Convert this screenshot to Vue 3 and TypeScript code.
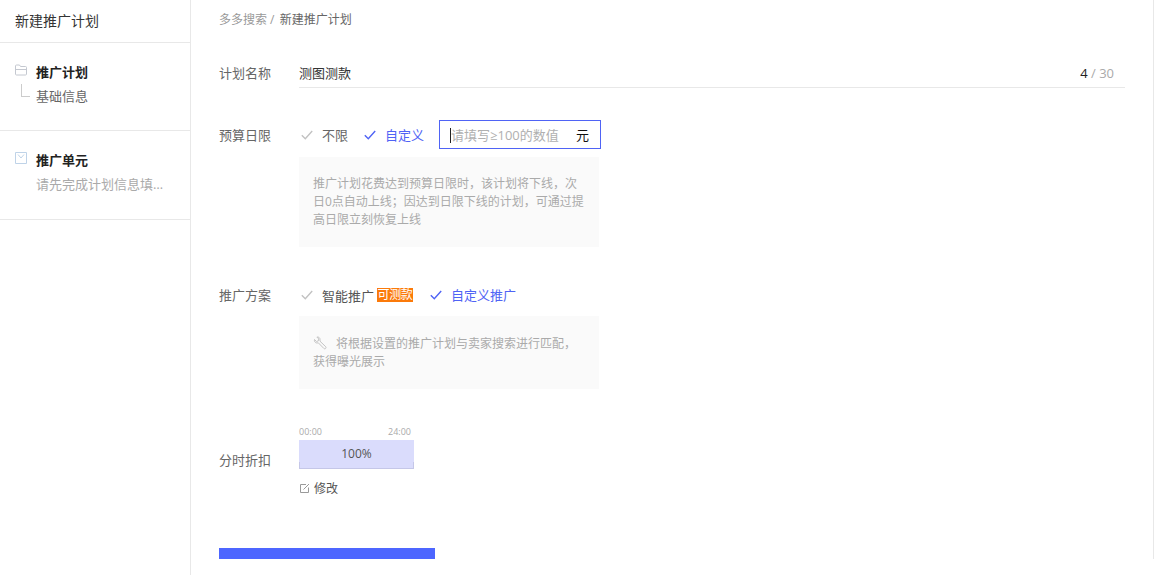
<script setup lang="ts">
interface SideSection {
  title: string
  sub: string
  muted: boolean
}
const sections: SideSection[] = [
  { title: '推广计划', sub: '基础信息', muted: false },
  { title: '推广单元', sub: '请先完成计划信息填写', muted: true },
]
</script>

<template>
  <div class="page">
    <aside class="side">
      <div class="side-title">新建推广计划</div>
      <section v-for="(s, i) in sections" :key="s.title" class="side-sec">
        <div class="side-head">
          <svg v-if="i === 0" class="side-ico" viewBox="0 0 12 12" width="12" height="12" fill="none" stroke="#c4c8d0">
            <path d="M.5 10V2a1 1 0 0 1 1-1h3l1 1.500h5a1 1 0 0 1 1 1V10a1 1 0 0 1-1 1h-9a1 1 0 0 1-1-1z" />
            <path d="M.5 5.500h11" />
          </svg>
          <svg v-else class="side-ico" viewBox="0 0 12 12" width="12" height="12" fill="none" stroke="#bfd3e8">
            <path d="M.5.5h11v11H.5z" />
            <path d="M3 2.500 6 6l3-3.500" />
          </svg>
          <span class="side-name">{{ s.title }}</span>
        </div>
        <div class="side-sub" :class="{ muted: s.muted }">
          <span v-if="!s.muted" class="elbow"></span>
          <span class="side-sub-text">{{ s.sub }}</span>
        </div>
      </section>
    </aside>

    <main class="main">
      <div class="crumb"><span class="crumb-a">多多搜索 / </span>新建推广计划</div>

      <div class="row row-name">
        <div class="label">计划名称</div>
        <div class="name-input">
          <span class="name-val">测图测款</span>
          <span class="count"><b>4</b> / 30</span>
        </div>
      </div>

      <div class="row row-budget">
        <div class="label">预算日限</div>
        <div class="body">
          <div class="opts">
            <span class="opt">
              <svg class="chk" viewBox="0 0 12 10" width="12" height="10" fill="none" stroke="#c2c2c2" stroke-width="1.400"><path d="M.8 5.200 4.300 8.700 11.200 1" /></svg>
              <span class="opt-text">不限</span>
            </span>
            <span class="opt on">
              <svg class="chk" viewBox="0 0 12 10" width="12" height="10" fill="none" stroke="#4f63f5" stroke-width="1.400"><path d="M.8 5.200 4.300 8.700 11.200 1" /></svg>
              <span class="opt-text">自定义</span>
            </span>
            <span class="money">
              <span class="caret"></span>
              <span class="ph">请填写≥100的数值</span>
              <span class="unit">元</span>
            </span>
          </div>
          <div class="help help-a">推广计划花费达到预算日限时，该计划将下线，次日0点自动上线；因达到日限下线的计划，可通过提高日限立刻恢复上线</div>
        </div>
      </div>

      <div class="row row-plan">
        <div class="label">推广方案</div>
        <div class="body">
          <div class="opts">
            <span class="opt">
              <svg class="chk" viewBox="0 0 12 10" width="12" height="10" fill="none" stroke="#c2c2c2" stroke-width="1.400"><path d="M.8 5.200 4.300 8.700 11.200 1" /></svg>
              <span class="opt-text dark">智能推广</span>
              <span class="tag">可测款</span>
            </span>
            <span class="opt on">
              <svg class="chk" viewBox="0 0 12 10" width="12" height="10" fill="none" stroke="#4f63f5" stroke-width="1.400"><path d="M.8 5.200 4.300 8.700 11.200 1" /></svg>
              <span class="opt-text">自定义推广</span>
            </span>
          </div>
          <div class="help help-b">
            <svg class="wrench" viewBox="0 0 14 14" width="14" height="14" fill="none" stroke="#c4c4c4">
              <path d="M1.500 3.500 3.500 5.500 5.300 4.900 5.800 3 3.900 1.100C5.500.6 7.200 1.800 7 3.700L7 5.200 12.800 10.800C13.300 11.500 12.900 12.400 12.300 12.700 11.800 12.900 11.200 12.800 10.800 12.400L5.300 6.800 3.900 7C2.200 7 1 5.200 1.500 3.500z" />
            </svg>将根据设置的推广计划与卖家搜索进行匹配，获得曝光展示
          </div>
        </div>
      </div>

      <div class="row row-time">
        <div class="label">分时折扣</div>
        <div class="body">
          <div class="hours"><span>00:00</span><span>24:00</span></div>
          <div class="bar">100%</div>
          <div class="edit">
            <svg viewBox="0 0 10 10" width="10" height="10" fill="none" stroke="#9a9a9a">
              <path d="M6 1.500H.5v8h8V4.500" />
              <path d="M3.500 6.500 9 1" />
            </svg>
            <span>修改</span>
          </div>
        </div>
      </div>

      <div class="submit"></div>
    </main>
  </div>
</template>

<style>
html,
body {
  margin: 0;
  background: #fff;
  overflow: hidden;
}
</style>

<style scoped>
.page {
  display: flex;
  width: 1168px;
  height: 575px;
  overflow: hidden;
  background: #fff;
  color: #333;
  font-family: "Open Sans", "Noto Sans CJK SC", sans-serif;
  font-size: 13px;
}
.side {
  width: 190px;
  flex: none;
  border-right: 1px solid #e8e8e8;
}
.side-title {
  height: 43px;
  box-sizing: border-box;
  padding-left: 15px;
  line-height: 42px;
  font-size: 14px;
  color: #333;
  border-bottom: 1px solid #e8e8e8;
}
.side-sec {
  height: 88px;
  box-sizing: border-box;
  padding: 18px 15px 0;
  border-bottom: 1px solid #e8e8e8;
}
.side-sec:last-child {
  height: 89px;
}
.side-head {
  display: flex;
  align-items: center;
  height: 20px;
}
.side-ico {
  flex: none;
  margin-top: -2px;
}
.side-name {
  margin-left: 9px;
  font-weight: 700;
  color: #222;
}
.side-sub {
  position: relative;
  display: flex;
  height: 20px;
  margin-top: 5px;
  line-height: 20px;
  padding-left: 21px;
  color: #666;
}
.side-sub.muted {
  color: #aaa;
}
.side-sub-text {
  width: 129px;
  overflow: hidden;
  white-space: nowrap;
  text-overflow: ellipsis;
}
.elbow {
  position: absolute;
  left: 6px;
  top: -2px;
  width: 8px;
  height: 12px;
  border-left: 1px solid #ccc;
  border-bottom: 1px solid #ccc;
}
.main {
  width: 963px;
  height: 559px;
  flex: none;
  box-sizing: border-box;
  padding: 0 28px;
  border-right: 1px solid #e8e8e8;
  overflow: hidden;
}
.crumb {
  height: 39px;
  line-height: 39px;
  font-size: 12px;
  color: #666;
}
.crumb-a {
  color: #999;
  margin-right: 2px;
}
.row {
  display: flex;
}
.label {
  flex: none;
  width: 80px;
  color: #666;
  line-height: 20px;
}
.body {
  flex: 1;
  min-width: 0;
}
.row-name {
  margin-top: 24px;
}
.name-input {
  flex: none;
  width: 826px;
  height: 25px;
  display: flex;
  justify-content: space-between;
  align-items: flex-start;
  line-height: 20px;
  border-bottom: 1px solid #e8e8e8;
  padding-right: 11px;
  box-sizing: border-box;
}
.name-val {
  color: #333;
}
.count {
  font-size: 13px;
  color: #aaa;
}
.count b {
  font-weight: 400;
  color: #222;
}
.row-budget {
  margin-top: 32px;
}
.row-budget .label {
  margin-top: 5px;
}
.opts {
  display: flex;
  align-items: center;
  height: 29px;
}
.opt {
  display: flex;
  align-items: center;
  color: #666;
  margin-right: 14px;
}
.opt.on {
  color: #4f63f5;
}
.chk {
  flex: none;
  margin-left: 2px;
  margin-right: 9px;
}
.opt-text.dark {
  color: #555;
  margin-top: 2px;
}
.money {
  position: relative;
  display: flex;
  align-items: center;
  justify-content: space-between;
  width: 162px;
  height: 29px;
  margin-left: 1px;
  box-sizing: border-box;
  padding: 0 11px 0 11px;
  border: 1px solid #4f63f5;
}
.caret {
  position: absolute;
  left: 10px;
  top: 7px;
  width: 1px;
  height: 15px;
  background: #222;
}
.ph {
  font-size: 13px;
  color: #b0b0b0;
  white-space: nowrap;
}
.unit {
  color: #111;
}
.help {
  width: 300px;
  box-sizing: border-box;
  background: #fafafa;
  color: #aaa;
  font-size: 12px;
  line-height: 18px;
}
.help-a {
  margin-top: 8px;
  height: 90px;
  padding: 18px 14px 0 14px;
}
.help-b {
  margin-top: 11px;
  height: 73px;
  padding: 19px 14px 0 14px;
}
.wrench {
  vertical-align: -2px;
  margin-right: 9px;
}
.row-plan {
  margin-top: 37px;
}
.row-plan .label {
  margin-top: 1px;
}
.row-plan .opts {
  height: 21px;
}
.tag {
  display: inline-block;
  height: 14px;
  line-height: 14px;
  width: 36px;
  margin-left: 3px;
  margin-right: 1px;
  margin-top: 1px;
  text-align: center;
  font-size: 12px;
  letter-spacing: -0.300px;
  color: #fff;
  background: #fb7a0a;
}
.row-time {
  margin-top: 36px;
}
.row-time .label {
  margin-top: 25px;
}
.hours {
  width: 112px;
  display: flex;
  justify-content: space-between;
  font-size: 9px;
  line-height: 11px;
  color: #aaa;
  margin-top: 1px;
  padding: 0 3px 0 0;
}
.bar {
  position: relative;
  width: 115px;
  height: 29px;
  margin-top: 3px;
  box-sizing: border-box;
  text-align: center;
  line-height: 28px;
  font-size: 12px;
  color: #555;
  background: #dadcfc;
  border-bottom: 1px solid #c5c7e8;
}
.bar::after {
  content: "";
  position: absolute;
  left: 0;
  right: 0;
  bottom: 0;
  height: 6px;
  box-sizing: border-box;
  border-left: 1px solid #c5c7e8;
  border-right: 1px solid #c5c7e8;
}
.edit {
  display: flex;
  align-items: center;
  height: 20px;
  margin-top: 9px;
  color: #555;
  font-size: 12px;
}
.edit svg {
  margin: 0 4px 0 1px;
}
.submit {
  width: 216px;
  height: 40px;
  margin-top: 50px;
  background: #4d66ff;
}
</style>
